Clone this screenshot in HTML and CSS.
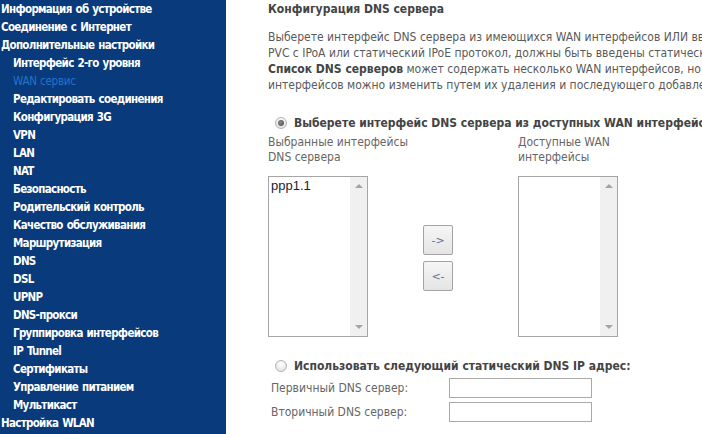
FILE: index.html
```html
<!DOCTYPE html>
<html lang="ru">
<head>
<meta charset="utf-8">
<title>Конфигурация DNS сервера</title>
<link rel="stylesheet" href="styles.css">
</head>
<body>
<div class="page">
  <nav class="sidebar">
    <a class="item">Информация об устройстве</a>
    <a class="item">Соединение с Интернет</a>
    <a class="item">Дополнительные настройки</a>
    <a class="item sub">Интерфейс 2-го уровня</a>
    <a class="item sub current">WAN сервис</a>
    <a class="item sub">Редактировать соединения</a>
    <a class="item sub">Конфигурация 3G</a>
    <a class="item sub">VPN</a>
    <a class="item sub">LAN</a>
    <a class="item sub">NAT</a>
    <a class="item sub">Безопасность</a>
    <a class="item sub">Родительский контроль</a>
    <a class="item sub">Качество обслуживания</a>
    <a class="item sub">Маршрутизация</a>
    <a class="item sub">DNS</a>
    <a class="item sub">DSL</a>
    <a class="item sub">UPNP</a>
    <a class="item sub">DNS-прокси</a>
    <a class="item sub">Группировка интерфейсов</a>
    <a class="item sub">IP Tunnel</a>
    <a class="item sub">Сертификаты</a>
    <a class="item sub">Управление питанием</a>
    <a class="item sub">Мультикаст</a>
    <a class="item">Настройка WLAN</a>
  </nav>
  <main class="content">
    <h1 class="title">Конфигурация DNS сервера</h1>
    <div class="desc">
      <div class="line">Выберете интерфейс DNS сервера из имеющихся WAN интерфейсов ИЛИ введите статические IP адреса DNS серверов. Для режима ATM, если только один</div>
      <div class="line">PVC с IPoA или статический IPoE протокол, должны быть введены статические IP адреса DNS серверов.</div>
      <div class="line"><b>Список DNS серверов</b> может содержать несколько WAN интерфейсов, но только один будет использоваться в соответствии с приоритетом. Порядок</div>
      <div class="line">интерфейсов можно изменить путем их удаления и последующего добавления в нужном порядке.</div>
    </div>

    <label class="choice first">
      <input type="radio" name="dnsmode" checked>
      <span>Выберете интерфейс DNS сервера из доступных WAN интерфейсов:</span>
    </label>

    <div class="picker">
      <div class="col">
        <div class="cap">Выбранные интерфейсы<br>DNS сервера</div>
        <div class="listbox">
          <div class="options"><div class="opt">ppp1.1</div></div>
          <div class="sbar"><span class="up"></span><span class="down"></span></div>
        </div>
      </div>
      <div class="moves">
        <button class="btn" type="button">-&gt;</button>
        <button class="btn" type="button">&lt;-</button>
      </div>
      <div class="col">
        <div class="cap">Доступные WAN<br>интерфейсы</div>
        <div class="listbox">
          <div class="options"></div>
          <div class="sbar"><span class="up"></span><span class="down"></span></div>
        </div>
      </div>
    </div>

    <label class="choice second">
      <input type="radio" name="dnsmode">
      <span>Использовать следующий статический DNS IP адрес:</span>
    </label>

    <div class="fields">
      <label class="flabel" for="p1">Первичный DNS сервер:</label>
      <input class="field" id="p1" type="text">
      <label class="flabel" for="p2">Вторичный DNS сервер:</label>
      <input class="field" id="p2" type="text">
    </div>
  </main>
</div>
</body>
</html>
```

FILE: styles.css
```css
html, body {
  margin: 0;
  padding: 0;
  overflow: hidden;
  background: #fff;
}
body {
  font-family: "DejaVu Sans", "Liberation Sans", sans-serif;
  font-stretch: condensed;
  font-size: 12px;
}
.page {
  display: flex;
  height: 434px;
  width: 1000px;
}
.sidebar {
  width: 226px;
  flex: none;
  background: #093a7b;
  display: flex;
  flex-direction: column;
}
.item {
  display: block;
  color: #fff;
  font-weight: bold;
  font-size: 11.5px;
  letter-spacing: -0.7px;
  word-spacing: 1px;
  line-height: 18px;
  height: 18px;
  padding-left: 1px;
  white-space: nowrap;
}
.item.sub {
  padding-left: 13px;
}
.item.current {
  font-weight: normal;
  letter-spacing: -0.2px;
  word-spacing: 0;
  color: #2573c4;
}
.content {
  flex: none;
  width: 700px;
  padding-left: 42px;
  color: #5a5a5a;
}
.title {
  margin: 0;
  padding-top: 1px;
  font-size: 12px;
  line-height: 16px;
  font-weight: bold;
  color: #444;
}
.desc {
  margin-top: 12px;
  line-height: 16px;
}
.line {
  white-space: nowrap;
}
.desc b {
  color: #444;
}
.choice {
  display: flex;
  align-items: center;
  gap: 7px;
  padding-left: 7px;
  height: 16px;
  font-weight: bold;
  color: #444;
  white-space: nowrap;
}
.choice.first {
  margin-top: 22px;
}
.choice.second {
  margin-top: 21px;
}
.choice input {
  appearance: none;
  -webkit-appearance: none;
  margin: 0;
  width: 12px;
  height: 12px;
  border-radius: 50%;
  border: 1px solid #b4b4b4;
  background: radial-gradient(circle at 50% 35%, #ffffff 0%, #e6e6e6 70%, #d6d6d6 100%);
  box-sizing: border-box;
  position: relative;
}
.choice input:checked::after {
  content: "";
  position: absolute;
  left: 2px;
  top: 2px;
  width: 6px;
  height: 6px;
  border-radius: 50%;
  background: radial-gradient(circle at 40% 40%, #8a8a8a, #4a4a4a);
}
.picker {
  display: grid;
  grid-template-columns: 155px 95px 120px;
  margin-top: 4px;
}
.col {
  display: flex;
  flex-direction: column;
}
.cap {
  line-height: 15px;
  color: #666;
  height: 41px;
}
.listbox {
  width: 100px;
  height: 161px;
  border: 1px solid #a6a6a6;
  box-sizing: border-box;
  display: flex;
  background: #fff;
}
.options {
  flex: 1;
  padding: 1px 2px;
}
.opt {
  font-family: "Liberation Sans", Arial, sans-serif;
  font-stretch: normal;
  font-size: 13px;
  line-height: 15px;
  color: #1c1c3a;
}
.sbar {
  width: 17px;
  flex: none;
  background: #f0f0f0;
  position: relative;
}
.sbar .up, .sbar .down {
  position: absolute;
  left: 5px;
  width: 0;
  height: 0;
  border-left: 4px solid transparent;
  border-right: 4px solid transparent;
}
.sbar .up {
  top: 7px;
  border-bottom: 4px solid #a3a3a3;
}
.sbar .down {
  bottom: 7px;
  border-top: 4px solid #a3a3a3;
}
.moves {
  display: flex;
  flex-direction: column;
  gap: 6px;
  padding-top: 90px;
}
.btn {
  width: 30px;
  height: 30px;
  margin: 0;
  padding: 0;
  border: 1px solid #a3a3a3;
  border-radius: 2px;
  background: linear-gradient(#f6f6f6, #e4e4e4);
  font-family: "DejaVu Sans", sans-serif;
  font-size: 11px;
  color: #5a6f9a;
}
.fields {
  display: grid;
  grid-template-columns: 181px 143px;
  row-gap: 4px;
  margin-top: 4px;
  align-items: center;
}
.flabel {
  padding-left: 3px;
  line-height: 20px;
  color: #666;
  white-space: nowrap;
}
.field {
  width: 143px;
  height: 20px;
  margin: 0;
  box-sizing: border-box;
  border: 1px solid #a9a9a9;
  background: #fff;
}
```
